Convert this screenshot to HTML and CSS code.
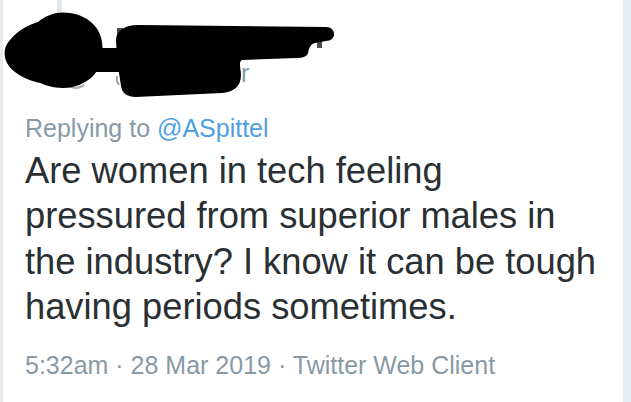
FILE: index.html
```html
<!DOCTYPE html>
<html lang="en">
<head>
<meta charset="utf-8">
<title>Tweet</title>
<link rel="stylesheet" href="styles.css">
</head>
<body>
<div class="page">
  <div class="edge edge-left"></div>
  <main class="tweet">
    <header class="tweet-header">
      <svg class="redaction" width="631" height="110" viewBox="0 0 631 110" aria-hidden="true">
        <rect x="57" y="0" width="5" height="14" fill="#e1e8ed"/>
        <path d="M68 85 Q76 91 84 85" fill="none" stroke="#b8b2a6" stroke-width="2.5"/>
        <rect x="117" y="28" width="6" height="10" fill="#4a4f54"/>
        <rect x="317" y="38" width="5" height="10" fill="#4a4f54"/>
        <text x="241" y="82" font-family="Liberation Sans, Arial, sans-serif" font-size="25" fill="#8899a6">r</text>
        <path d="M117 76 Q116 81 119 85" fill="none" stroke="#9aa3aa" stroke-width="2"/>
        <path fill="#000" d="M10 40 C18 30 28 25 38 22 C47 14 59 11 70 13 C86 15 100 26 102 42 C104 56 100 70 92 77 C85 83 76 88 63 88 C52 88 46 85 40 83 C27 80 13 74 7 63 C3 55 4 46 10 40 Z"/>
        <path fill="#000" d="M96 48 L121 48 L121 72 L94 72 Z"/>
        <path fill="#000" d="M116 40 C116 31 125 25 138 25 L326 27 C331 27 334 30 334 34 C334 38 331 41 326 41 L315 43 C310 44 309 49 308 53 C307 57 302 58 296 58 L242 60 C238 62 241 68 241 75 C241 87 233 92 222 93 L136 97 C127 97 122 93 121 86 L117 60 Z"/>
      </svg>
    </header>
    <p class="replying">Replying to <a class="mention" href="#">@ASpittel</a></p>
    <p class="tweet-text">Are women in tech feeling pressured from superior males in the industry? I know it can be tough having periods sometimes.</p>
    <p class="meta">5:32am · 28 Mar 2019 · Twitter Web Client</p>
  </main>
  <div class="edge edge-right"></div>
</div>
</body>
</html>
```
FILE: styles.css
```css
html, body {
  margin: 0;
  padding: 0;
  background: #ffffff;
}
body {
  font-family: "Liberation Sans", Arial, Helvetica, sans-serif;
  overflow: hidden;
}
.page {
  display: flex;
  width: 631px;
  height: 402px;
}
.edge {
  background: #e6ecf0;
  flex: none;
}
.edge-left {
  width: 3px;
}
.edge-right {
  width: 8px;
}
.tweet {
  flex: 1;
  display: flex;
  flex-direction: column;
  padding: 0 22px 0 22px;
  min-width: 0;
}
.tweet-header {
  position: relative;
  height: 113px;
  flex: none;
}
.redaction {
  position: absolute;
  left: -25px;
  top: 0;
}
.replying {
  margin: 0;
  font-size: 25px;
  line-height: 30px;
  color: #8899a6;
}
.mention {
  color: #4f9fe0;
  text-decoration: none;
}
.tweet-text {
  margin: 5px 0 0;
  font-size: 36.3px;
  line-height: 45.3px;
  color: #292f33;
}
.meta {
  margin: 21px 0 0;
  font-size: 25px;
  line-height: 30px;
  color: #8899a6;
}
```
